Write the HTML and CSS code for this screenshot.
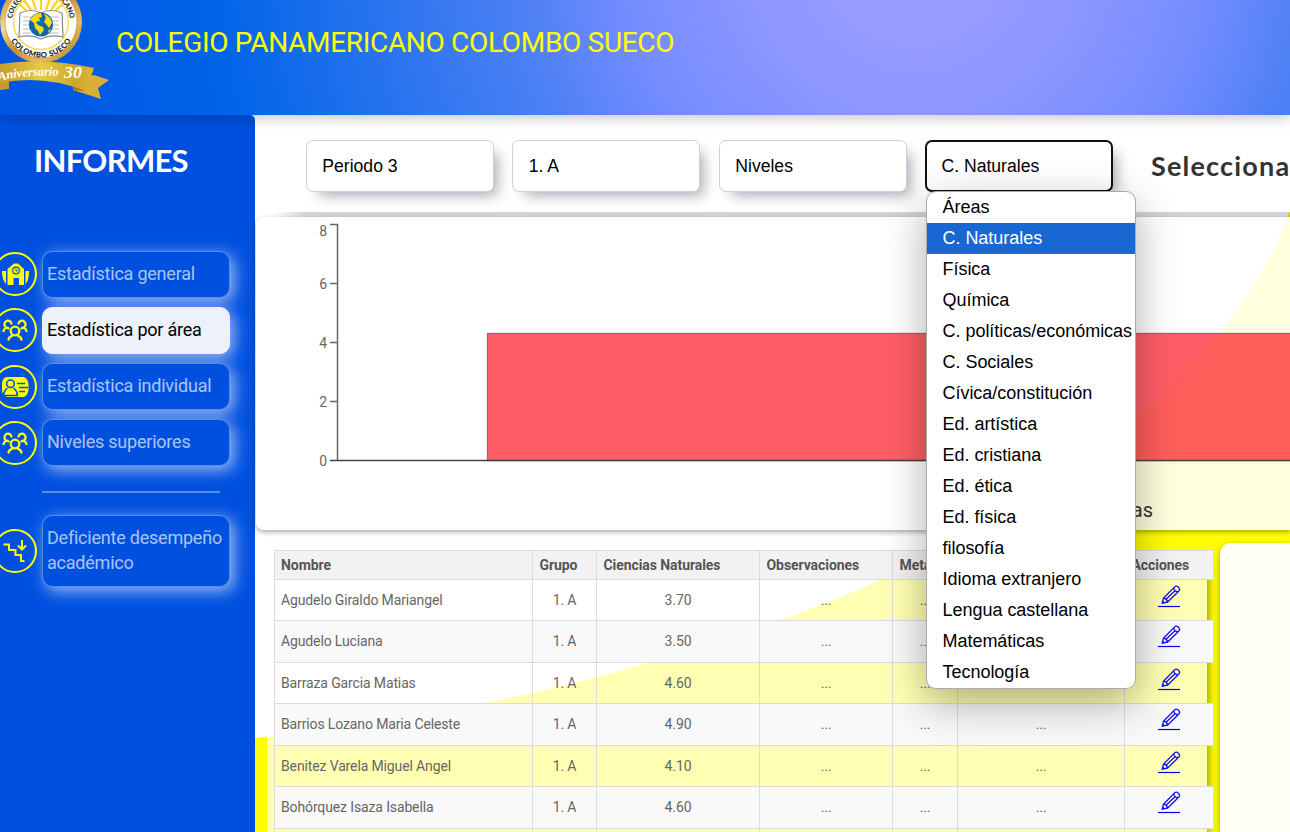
FILE: index.html
```html
<!DOCTYPE html>
<html lang="es">
<head>
<meta charset="utf-8">
<title>Informes</title>
<link rel="stylesheet" href="styles.css">
</head>
<body>
<svg width="0" height="0" class="defs" aria-hidden="true">
  <defs>
    <symbol id="pencil" viewBox="0 0 24 24">
      <g fill="none" stroke="#1010f0" stroke-width="1.3" stroke-linejoin="round">
        <path d="M5.2 18.200 L6.500 13.200 L17.600 1.900 Q19.200 .4 21.200 1.900 Q23.600 4 21.900 6 L10.700 17 Z"/>
        <path d="M6.500 13.200 Q9.800 13.600 10.700 17 M16.700 2.800 Q17.300 6.400 21 6.800 M8.600 14.800 L18.200 5.500"/>
      </g>
      <path d="M4.800 18.800 L5.800 15.500 L8.200 17.700 Z" fill="#1010f0"/>
      <path d="M1 21.500 H23" stroke="#0000f5" stroke-width="1.200"/>
    </symbol>
    <symbol id="group" viewBox="0 0 28 24">
      <g fill="none" stroke="#ff0" stroke-width="2.300" stroke-linecap="round">
        <circle cx="14" cy="13" r="4.300"/>
        <path d="M7.500 21.500 Q8 18.800 11 17.800 M20.500 21.500 Q20 18.800 17 17.800"/>
        <path d="M10.500 5.500 A3.600 3.600 0 1 0 5.500 9.600 Q3 10.500 2.500 13 M5.500 9.700 L7.500 10.300"/>
        <path d="M17.500 5.500 A3.600 3.600 0 1 1 22.500 9.600 Q25 10.500 25.500 13 M22.500 9.700 L20.500 10.300"/>
      </g>
    </symbol>
  </defs>
</svg>

<header class="header">
  <svg class="logo" width="112" height="104" viewBox="0 0 112 104">
    <defs>
      <linearGradient id="gold" x1="0" y1="0" x2="1" y2="1"><stop offset="0" stop-color="#b87912"/><stop offset=".3" stop-color="#f6dd8a"/><stop offset=".5" stop-color="#c98d25"/><stop offset=".75" stop-color="#e6bf5c"/><stop offset="1" stop-color="#a56b0b"/></linearGradient>
      <linearGradient id="band" x1="0" y1="0" x2="1" y2="0"><stop offset="0" stop-color="#c79d2c"/><stop offset=".45" stop-color="#e6c945"/><stop offset=".8" stop-color="#cfa62f"/><stop offset="1" stop-color="#d9b63a"/></linearGradient>
      <path id="arcLow" d="M5.500 22 A35.500 35.500 0 0 0 76.500 22"/>
      <path id="arcTop" d="M12 22 A29 29 0 0 1 70 22"/>
      <path id="arcBand" d="M-1 81 Q25 74 61 76"/>
    </defs>
    <path d="M94 75 L109 80 L98 88 L101 99 L73 90 L73 80 Z" fill="#d9af37"/>
    <path d="M0 90 L9 89 L9 82 L0 80 Z" fill="#c9972a"/>
    <path d="M73 90 L86 91 L73 84 Z" fill="#a87415"/>
    <path d="M0 64 Q45 57 94 68 L86 91 Q43 74 0 83 Z" fill="url(#band)"/>
    <circle cx="41" cy="22" r="38.500" fill="#fff" stroke="url(#gold)" stroke-width="5"/>
    <circle cx="41" cy="22" r="36" fill="none" stroke="#a9731a" stroke-width=".5"/>
    <circle cx="41" cy="22" r="27.500" fill="#fff" stroke="#f6d84a" stroke-width="1.300"/>
    <g stroke="#ffd50f" stroke-width="2.200"><path d="M41 10V-5M36 10L31-5M46 10L51-5M31 10L24 0M51 10L58 0M27 11L19 4M55 11L63 4"/></g>
    <path d="M20 13 Q31 8 41 13 Q51 8 62 13 L63 37 Q51 34 41 39 Q31 34 19 37 Z" fill="#fff" stroke="#888" stroke-width="1.200"/>
    <path d="M23 17h9M23 21h8M23 25h8M23 29h9M23 33h10M50 17h9M51 21h8M51 25h8M50 29h9M49 33h10" stroke="#aaa" stroke-width=".8"/>
    <circle cx="41" cy="24.500" r="12" fill="#0868ae"/>
    <path d="M30 20 Q34 13 41 13 L42 17 L39 18 L40 21 L36 22 L38 25 L43 27 L44 30 L40 35 L38 31 L35 28 L34 23 Z M44 13.500 Q51 17 52 23 L49 28 L46 24 L44 22 L46 18 Z M48 31 L51 28 L49 33 Z" fill="#ffdc00"/>
    <text class="seal" font-size="7.600"><textPath href="#arcLow" startOffset="50%" text-anchor="middle" textLength="72">COLOMBO SUECO</textPath></text>
    <text class="seal" font-size="7"><textPath href="#arcTop" startOffset="50%" text-anchor="middle" textLength="84">COLEGIO PANAMERICANO</textPath></text>
    <text class="script" font-size="12.500"><textPath href="#arcBand" textLength="60">Aniversario</textPath></text>
    <text class="thirty" x="64" y="78" font-size="17" textLength="18" lengthAdjust="spacingAndGlyphs">30</text>
  </svg>
  <h1 class="school">COLEGIO PANAMERICANO COLOMBO SUECO</h1>
</header>

<div class="body">
  <aside class="sidebar">
    <h2 class="side-title">INFORMES</h2>
    <nav class="nav">
      <div class="nav-row">
        <span class="ring"><svg width="28" height="24" viewBox="0 0 28 24"><path fill="#ff0" d="M6.500 7 L13 1.500 H17 L23 7 V23 H18 V16 H12.500 V23 H6.500 Z M1 9 H5 V22 L3.500 20 Q1 16 1 9 Z M24.500 9 H28 Q28 16 26 20 L24.500 22 Z"/><circle cx="15" cy="8.500" r="3.300" fill="none" stroke="#0050e0" stroke-width="1.200"/><path d="M15 6.500V9H16.500" fill="none" stroke="#0050e0"/></svg></span>
        <a class="nav-btn">Estadística general</a>
      </div>
      <div class="nav-row">
        <span class="ring"><svg width="28" height="24"><use href="#group"/></svg></span>
        <a class="nav-btn active">Estadística por área</a>
      </div>
      <div class="nav-row">
        <span class="ring"><svg width="28" height="24" viewBox="0 0 28 24"><path fill="#ff0" d="M5 2 H23 Q27 4 27.500 9 V15 Q27 20 23 22 H6 Q1 20 1 15 V9 Q1 4 5 2Z"/><g fill="none" stroke="#0050e0" stroke-width="1.500"><circle cx="9.500" cy="8.700" r="3.800"/><path d="M2.500 20 Q3 15.500 6.500 13 M12.500 13 Q16 15.500 16.500 20 M3 20.500 H17 M16 8.500 H24 M18 12.500 H27 M18 16.500 H24"/></g></svg></span>
        <a class="nav-btn">Estadística individual</a>
      </div>
      <div class="nav-row">
        <span class="ring"><svg width="28" height="24"><use href="#group"/></svg></span>
        <a class="nav-btn">Niveles superiores</a>
      </div>
      <hr class="divider">
      <div class="nav-row">
        <span class="ring"><svg width="28" height="24" viewBox="0 0 28 24"><path fill="none" stroke="#ff0" stroke-width="2" d="M2.500 5.500 H8 V11 H14.500 V16 H20 V22 H23.500 M21 1 V10.500 M17 6.500 L21 10.500 L25 6.500"/></svg></span>
        <a class="nav-btn tall">Deficiente desempeño académico</a>
      </div>
    </nav>
  </aside>

  <main class="main">
    <svg class="wave" width="1035" height="717" viewBox="255 115 1035 717"><path fill="#ff0" d="M255 738 C340 729 420 719 487 703 C545 691 600 677 650 662 C700 648 740 634 780 620 C815 608 850 594 880 580 C980 537 1060 482 1138 417 C1172 388 1200 359 1221 332 C1252 292 1276 252 1290 210 V832 H255Z"/></svg>
    <section class="filters">
      <div class="select">Periodo 3</div>
      <div class="select">1. A</div>
      <div class="select">Niveles</div>
      <div class="select open">C. Naturales
        <ul class="menu">
          <li>Áreas</li><li class="picked">C. Naturales</li><li>Física</li><li>Química</li><li>C. políticas/económicas</li><li>C. Sociales</li><li>Cívica/constitución</li><li>Ed. artística</li><li>Ed. cristiana</li><li>Ed. ética</li><li>Ed. física</li><li>filosofía</li><li>Idioma extranjero</li><li>Lengua castellana</li><li>Matemáticas</li><li>Tecnología</li>
        </ul>
      </div>
      <h3 class="hint">Selecciona</h3>
    </section>

    <section class="chart">
      <svg width="1034" height="313" viewBox="256 217 1034 313">
        <g stroke="#666" stroke-width="1.500" fill="none"><path d="M330 224.500H337.500V460.500M330 283.500H337M330 342.500H337M330 401.500H337"/></g>
        <rect x="487.500" y="333.500" width="900" height="127" fill="#ff000d" fill-opacity=".63" stroke="#777" stroke-width="1.300"/>
        <path d="M330 460.500H1290" stroke="#444" stroke-width="1.300"/>
        <g class="ticks"><text x="327" y="236">8</text><text x="327" y="289">6</text><text x="327" y="348">4</text><text x="327" y="407">2</text><text x="327" y="466">0</text></g>
        <text class="caption" x="1153" y="517">Áreas</text>
      </svg>
    </section>

    <div class="lower">
      <section class="list">
        <table class="grid">
          <colgroup><col class="c1"><col class="c2"><col class="c3"><col class="c4"><col class="c5"><col class="c6"><col class="c7"></colgroup>
          <thead><tr><th>Nombre</th><th>Grupo</th><th>Ciencias Naturales</th><th>Observaciones</th><th>Metas</th><th></th><th>Acciones</th></tr></thead>
          <tbody>
            <tr><td>Agudelo Giraldo Mariangel</td><td>1. A</td><td>3.70</td><td>...</td><td>...</td><td></td><td><svg class="edit"><use href="#pencil"/></svg></td></tr>
            <tr><td>Agudelo Luciana</td><td>1. A</td><td>3.50</td><td>...</td><td>...</td><td></td><td><svg class="edit"><use href="#pencil"/></svg></td></tr>
            <tr><td>Barraza Garcia Matias</td><td>1. A</td><td>4.60</td><td>...</td><td>...</td><td></td><td><svg class="edit"><use href="#pencil"/></svg></td></tr>
            <tr><td>Barrios Lozano Maria Celeste</td><td>1. A</td><td>4.90</td><td>...</td><td>...</td><td>...</td><td><svg class="edit"><use href="#pencil"/></svg></td></tr>
            <tr><td>Benitez Varela Miguel Angel</td><td>1. A</td><td>4.10</td><td>...</td><td>...</td><td>...</td><td><svg class="edit"><use href="#pencil"/></svg></td></tr>
            <tr><td>Bohórquez Isaza Isabella</td><td>1. A</td><td>4.60</td><td>...</td><td>...</td><td>...</td><td><svg class="edit"><use href="#pencil"/></svg></td></tr>
            <tr><td></td><td></td><td></td><td></td><td></td><td></td><td></td></tr>
          </tbody>
        </table>
      </section>
      <section class="detail"></section>
    </div>
  </main>
</div>
</body>
</html>
```

FILE: styles.css
```css
* { box-sizing: border-box; }
body { margin: 0; height: 832px; overflow: hidden; background: #fff; font-family: Roboto, sans-serif; display: flex; flex-direction: column; }
.defs { position: absolute; }

.header { position: relative; z-index: 2; flex: none; height: 115px; display: flex; align-items: flex-start; gap: 4px;
  background: radial-gradient(circle at 915px -50px, #a0a0ff 0, #8c96ff 170px, #768dff 285px, #4b80f4 400px, #0064e8 705px, #004fe0 1000px);
  box-shadow: 0 2px 14px rgba(0,0,0,.25); }
.logo { flex: none; }
.seal { font-family: Lato, sans-serif; font-weight: 900; fill: #222; }
.script { font-family: "Liberation Serif", serif; font-style: italic; font-weight: bold; fill: #fff; }
.thirty { font-family: "Liberation Serif", serif; fill: #fff; font-style: italic; font-weight: bold; }
.school { margin: 26px 0 0; font-size: 28px; line-height: 33px; font-weight: 400; letter-spacing: -.32px; color: #ff0; white-space: nowrap; }

.body { flex: 1; display: flex; min-height: 0; }
.sidebar { flex: none; width: 255px; background: #0050e0; border-radius: 0 5px 0 0; }
.side-title { margin: 26px 0 0 34px; font: bold 31px/38px Lato, sans-serif; letter-spacing: -.7px; color: #fff; }
.nav { margin-top: 72px; display: flex; flex-direction: column; gap: 9.300px; }
.nav-row { display: flex; align-items: center; gap: 5px; }
.ring { flex: none; width: 44px; height: 44px; margin-left: -7px; border: 2px solid #ff0; border-radius: 50%; display: flex; align-items: center; justify-content: center; }
.nav-btn { width: 188px; height: 46.800px; padding: 9px 4px; border: 1px solid rgba(255,255,255,.35); border-radius: 10px; font-size: 18px; line-height: 26px; letter-spacing: -.22px; color: rgba(255,255,255,.68); background: #0050e0; box-shadow: 4px 4px 16px rgba(255,255,255,.62); white-space: nowrap; }
.nav-btn.active { background: #edf1fa; color: #000; border-color: #edf1fa; }
.nav-btn.tall { height: 72px; line-height: 25px; white-space: normal; }
.divider { width: 178px; height: 2px; border: 0; margin: 15.500px 0 13px 42px; background: rgba(255,255,255,.35); }

.main { position: relative; flex: 1; min-width: 0; display: flex; flex-direction: column; gap: 5px; }
.wave { position: absolute; left: 0; top: 0; z-index: -1; }
.filters { position: relative; z-index: 1; flex: none; height: 97px; padding: 25px 0 0 51px; display: flex; gap: 18.900px; background: #fff; }
.filters::after { content: ""; position: absolute; left: 20px; right: 0; top: 97px; height: 5px; background: linear-gradient(90deg, rgba(20,20,40,0), rgba(20,20,40,.18) 30px); }
.select { flex: none; position: relative; width: 187.600px; height: 52px; padding: 0 15.300px; border: 1px solid #cdd0d8; border-radius: 7px; background: #fff; font: 17.600px/50px "Liberation Sans", Arial, sans-serif; color: #000; box-shadow: 8px 8px 14px -5px rgba(30,30,60,.4); }
.select.open { border: 2px solid #101010; padding: 0 14px; line-height: 48px; }
.menu { position: absolute; left: -1px; top: 49px; z-index: 5; width: 210px; margin: 0; padding: 0; list-style: none; overflow: hidden; border: 1px solid #aaa; border-radius: 10px; background: #fff; font-size: 18px; line-height: 31px; box-shadow: 0 14px 44px rgba(0,0,0,.32); }
.menu li { height: 31px; padding-left: 15px; white-space: nowrap; letter-spacing: -.02px; }
.menu .picked { background: #1967d2; color: #fff; }
.hint { margin: 8px 0 0 19px; font: bold 27px/36px Lato, sans-serif; letter-spacing: 1.200px; color: #333; }

.chart { flex: none; height: 313px; margin-left: 1px; border-radius: 8px 0 0 8px; background: rgba(255,255,255,.87); box-shadow: 0 2px 5px rgba(0,0,0,.35); overflow: hidden; }
.chart svg { display: block; }
.ticks text { font: 14px Roboto, sans-serif; fill: #666; text-anchor: end; }
.caption { font: 20px Roboto, sans-serif; fill: #333; text-anchor: end; }

.lower { flex: 1; min-height: 0; display: flex; align-items: stretch; gap: 13px; margin-top: 8px; padding-left: 12px; }
.list { flex: none; width: 940px; margin-top: 7px; padding-left: 7px; background: rgba(255,255,255,.7); box-shadow: 8px 8px 8px -6px rgba(0,0,0,.4); }
.detail { flex: 1; border-radius: 10px 0 0 0; background: #fffff4; box-shadow: 0 2px 6px rgba(0,0,0,.35); }
.grid { width: 940px; table-layout: fixed; border-collapse: collapse; font-size: 14px; letter-spacing: -.13px; color: #666; }
.c1 { width: 258px; } .c2 { width: 64px; } .c3 { width: 163px; } .c4 { width: 133px; } .c5 { width: 65px; } .c6 { width: 167px; } .c7 { width: 89px; }
.grid th, .grid td { border: 1px solid #dcdcdc; padding: 0 6px; overflow: hidden; white-space: nowrap; text-align: center; }
.grid th { height: 29px; background: #f2f2f2; color: #555; text-align: left; font-weight: 700; letter-spacing: -.07px; padding-left: 6.500px; }
.grid th:first-child { padding-left: 6px; }
.grid td:first-child { text-align: left; }
.grid tbody tr { height: 41px; }
.grid tbody tr:nth-child(even) { height: 42px; background: #f9f9f9; }
.grid tbody tr:nth-child(even) td { padding-bottom: 2px; }
.edit { display: block; width: 24px; height: 24px; margin: -7px auto 0; }
```
